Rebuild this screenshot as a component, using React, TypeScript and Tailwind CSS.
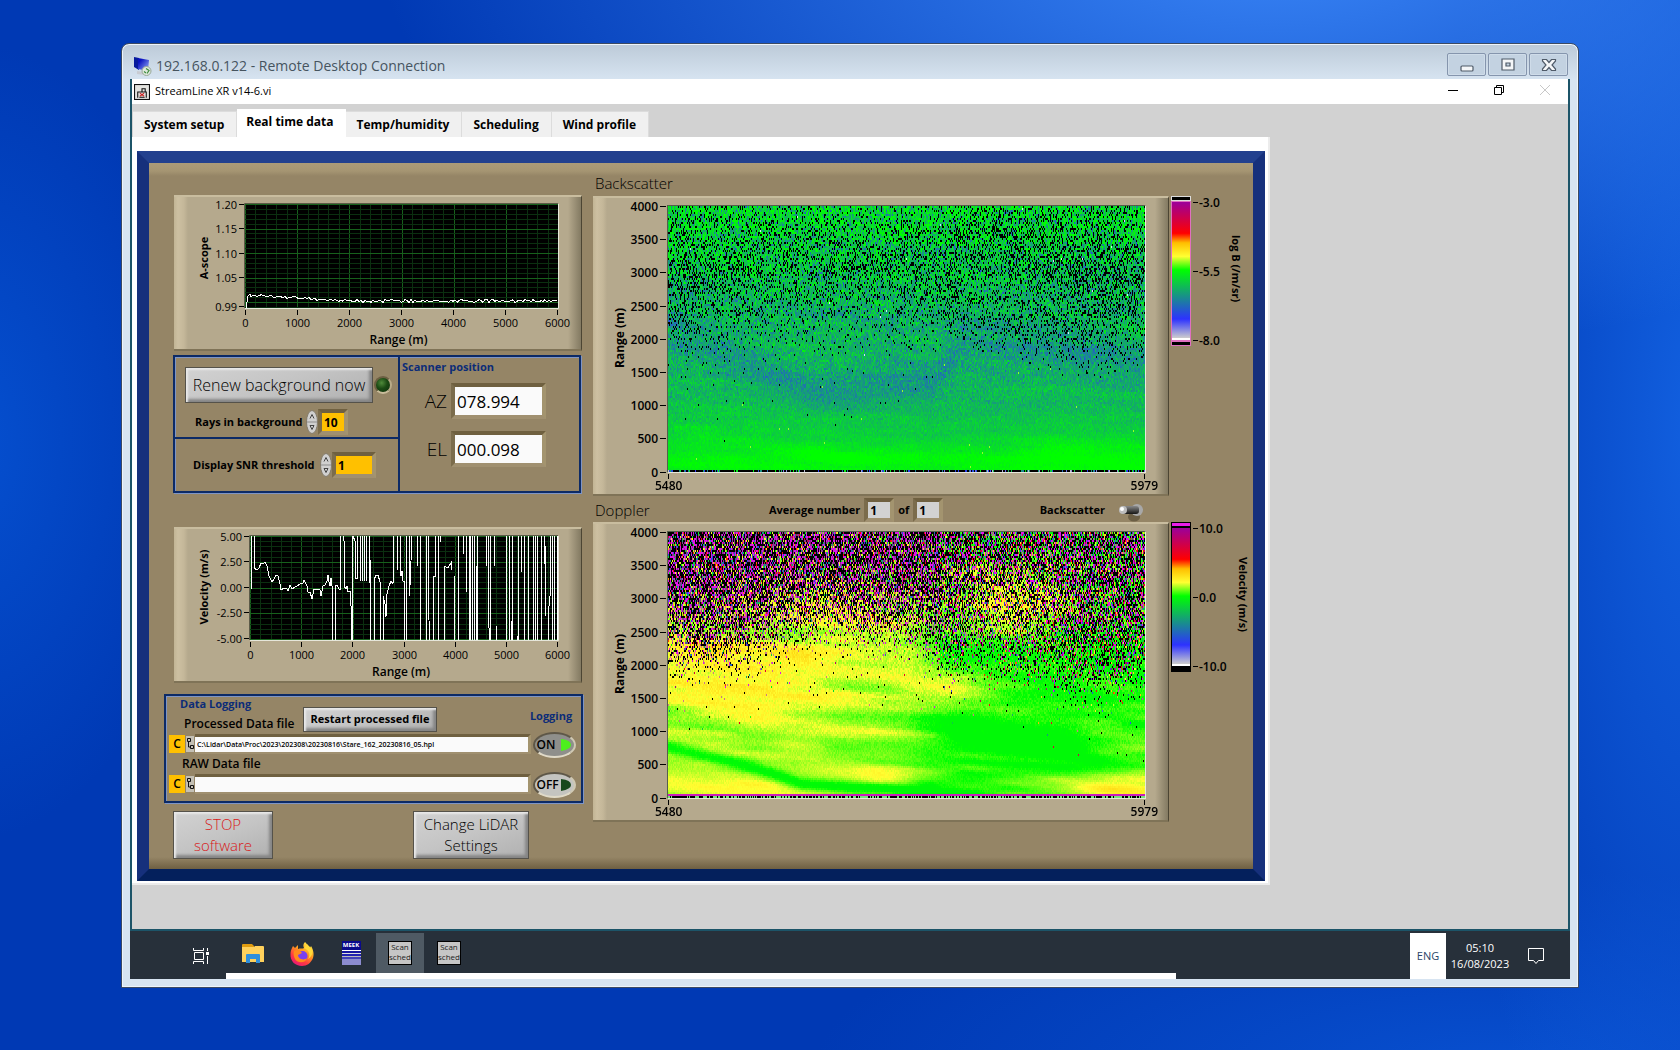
import { useEffect, useRef } from "react";
import type { ReactNode } from "react";

type Rgb = [number, number, number];

const SCALE: [number, Rgb][] = [
  [0, [205, 205, 205]],
  [0.14, [45, 50, 255]],
  [0.5, [0, 255, 0]],
  [0.6, [255, 255, 50]],
  [0.7, [255, 190, 0]],
  [0.77, [255, 0, 0]],
  [1, [155, 0, 155]],
];

function colour(v: number): Rgb {
  if (v <= 0) return [235, 235, 245];
  for (let i = 1; i < SCALE.length; i++) {
    const [b, cb] = SCALE[i];
    const [a, ca] = SCALE[i - 1];
    if (v <= b) {
      const t = (v - a) / (b - a);
      return [ca[0] + (cb[0] - ca[0]) * t, ca[1] + (cb[1] - ca[1]) * t, ca[2] + (cb[2] - ca[2]) * t];
    }
  }
  return [232, 30, 232];
}

function makeRandom(seed: number) {
  let s = seed;
  return () => {
    s = (s + 0x6d2b79f5) | 0;
    let t = Math.imul(s ^ (s >>> 15), 1 | s);
    t = (t + Math.imul(t ^ (t >>> 7), 61 | t)) ^ t;
    return ((t ^ (t >>> 14)) >>> 0) / 4294967296;
  };
}

function hash(x: number, y: number) {
  let h = Math.imul(x, 374761393) + Math.imul(y, 668265263);
  h = Math.imul(h ^ (h >>> 13), 1274126177);
  return ((h ^ (h >>> 16)) >>> 0) / 4294967296;
}

// smooth value noise in -1..1
function smooth(x: number, y: number) {
  const xi = Math.floor(x);
  const yi = Math.floor(y);
  const u = (x - xi) ** 2 * (3 - 2 * (x - xi));
  const w = (y - yi) ** 2 * (3 - 2 * (y - yi));
  const top = hash(xi, yi) * (1 - u) + hash(xi + 1, yi) * u;
  const low = hash(xi, yi + 1) * (1 - u) + hash(xi + 1, yi + 1) * u;
  return (top * (1 - w) + low * w) * 2 - 1;
}

const clamp = (v: number) => Math.max(0, Math.min(1, v));
const bump = (d: number, width: number) => Math.exp(-((d / width) ** 2));

// linear interpolation through [x, y] knots
function curve(knots: [number, number][], x: number) {
  for (let i = 1; i < knots.length; i++) {
    if (x <= knots[i][0]) {
      const t = (x - knots[i - 1][0]) / (knots[i][0] - knots[i - 1][0]);
      return knots[i - 1][1] + (knots[i][1] - knots[i - 1][1]) * t;
    }
  }
  return knots[knots.length - 1][1];
}

const COLS = 477;
const GATES = 133;

type Sample = (x: number, h: number, rnd: () => number) => Rgb;

function backscatter(x: number, h: number, rnd: () => number): Rgb {
  if (h < 0.004) return rnd() < 0.7 ? [0, 0, 0] : colour(rnd() * 0.5);
  const noise = rnd() + rnd() + rnd() - 1.5;
  let dropout = curve([[0, 0], [0.2, 0.001], [0.42, 0.01], [0.55, 0.08], [0.65, 0.17], [0.78, 0.24], [0.9, 0.19], [1, 0.15]], h);
  dropout += 0.1 * bump(x, 0.12) * bump(h - 0.55, 0.08);
  if (x > 0.57) {
    const floor = curve([[0.57, 0.5], [0.7, 0.42], [0.85, 0.34], [1, 0.36]], x);
    dropout += curve([[0, 0], [0.12, 0.12], [0.3, 0.06], [0.5, 0.03]], h - floor);
  }
  dropout *= 1 + 0.35 * smooth(x * 9 + 5, h * 9) + 0.3 * smooth(x * 3, h * 70);
  if (rnd() < dropout) return [0, 0, 0];
  const base = curve([[0, 0.48], [0.07, 0.47], [0.13, 0.43], [0.2, 0.4], [0.28, 0.37], [0.4, 0.37], [0.6, 0.365], [0.8, 0.4], [0.92, 0.43], [1, 0.44]], h);
  const streak = smooth(x * 6, h * 32 + x * 4) * 0.02 + smooth(x * 16, h * 66) * 0.014;
  const blue = 0.05 * bump(h - curve([[0, 0.54], [0.3, 0.3], [0.55, 0.32], [0.62, 0.5], [0.8, 0.45], [1, 0.42]], x), 0.07);
  const ridge = 0.035 * bump(h - curve([[0, 0.18], [0.2, 0.1], [0.35, 0.06], [1, 0.02]], x), 0.03);
  const v = base + streak - blue + ridge + noise * (0.025 + 0.18 * clamp(h - 0.08));
  if (rnd() < 0.0007) return h > 0.4 ? [210, 235, 240] : [150, 255, 40];
  return colour(Math.max(0.1, Math.min(0.5, v)));
}

function doppler(x: number, h: number, rnd: () => number): Rgb {
  if (h < 0.004) return rnd() < 0.5 ? [0, 0, 0] : [120, 230, 120];
  if (h < 0.012) return [205, 30, 190];
  const edge = curve([[0, 0.5], [0.12, 0.52], [0.3, 0.58], [0.5, 0.59], [0.56, 0.55], [0.575, 0.49], [0.66, 0.48], [0.76, 0.43], [0.88, 0.4], [1, 0.41]], x);
  const d = h - edge + 0.04 * smooth(x * 14, h * 3);
  let chaos = curve([[-0.3, 0], [-0.1, 0.015], [-0.04, 0.07], [0.03, 0.3], [0.12, 0.66], [0.25, 0.9], [0.5, 0.98]], d);
  if (x > 0.57) chaos *= 0.85;
  const plume = bump(x - 0.72, 0.12) * bump(h - 0.72, 0.12);
  chaos *= 1 - 0.35 * plume;
  if (rnd() < chaos) {
    const pick = rnd();
    if (pick < 0.48) return [0, 0, 0];
    const low = clamp(1 - d / 0.3);
    const calm = x > 0.57 ? 0.3 : 0;
    if (pick < 0.48 + 0.2 * (1 - 0.6 * low)) return [225, 20, 232];
    if (pick < 0.8 - calm * 0.5) return low > rnd() ? [205, 120, 135] : [140, 50, 150];
    return colour(0.1 + rnd() * 0.88);
  }
  let v = curve([[0, 0.58], [0.3, 0.585], [0.5, 0.565], [0.57, 0.545], [0.62, 0.53], [1, 0.515]], x);
  v += 0.1 * plume;
  v += 0.025 * bump(h - 0.5, 0.12) * clamp((0.56 - x) * 20);
  if (x > 0.57) v -= 0.04 * bump(h - 0.53, 0.05);
  if (x > 0.5) v += 0.035 * bump(h - 0.42, 0.06) * bump(x - 0.6, 0.05);
  v += smooth(x * 5, h * 19 + x * 3) * 0.03 + smooth(x * 11, h * 44 + x * 5) * 0.024;
  // descending low-speed band on the left, and its continuation
  v -= 0.1 * bump(h - curve([[0, 0.185], [0.1, 0.145], [0.18, 0.11], [0.28, 0.05], [0.4, 0.03], [0.55, 0.02], [1, -0.2]], x), 0.026);
  v -= 0.04 * bump(h - (0.27 - 0.4 * (x - 0.55)), 0.05) * clamp((x - 0.5) * 8);
  v -= 0.04 * bump(h - 0.31 + 0.1 * (x - 0.4), 0.025) * clamp(1 - Math.abs(x - 0.45) * 4);
  v += 0.13 * bump(x - 1, 0.18) * bump(h - 0.04, 0.06);
  v += (rnd() - 0.5) * (0.015 + 0.06 * h);
  return colour(Math.max(0.49, Math.min(0.66, v)));
}

function HeatMap({ sample, seed, label }: { sample: Sample; seed: number; label: string }) {
  const ref = useRef<HTMLCanvasElement>(null);

  useEffect(() => {
    const ctx = ref.current?.getContext("2d");
    if (!ctx) return;
    const rnd = makeRandom(seed);
    const image = ctx.createImageData(COLS, GATES);
    for (let row = 0; row < GATES; row++) {
      for (let col = 0; col < COLS; col++) {
        const [r, g, b] = sample(col / COLS, 1 - (row + 1) / GATES, rnd);
        const i = (row * COLS + col) * 4;
        image.data[i] = r;
        image.data[i + 1] = g;
        image.data[i + 2] = b;
        image.data[i + 3] = 255;
      }
    }
    ctx.putImageData(image, 0, 0);
  }, [sample, seed]);

  return (
    <canvas
      ref={ref}
      width={COLS}
      height={GATES}
      role="img"
      aria-label={label}
      className="block h-[268px] w-full border border-t-[#55604a] border-l-[#55604a] border-r-[#e8e8dc] border-b-[#e8e8dc] [image-rendering:pixelated]"
    />
  );
}

function Bevel({ children, className = "" }: { children: ReactNode; className?: string }) {
  return (
    <div
      className={`border-t-2 border-r border-b-2 border-t-[#c9bd9f] border-r-[#4c4533] border-b-[#7f7357] bg-[linear-gradient(to_right,#c2b595_0,#cdc0a2_4px,#c4b799_10px,#b5a98d_14px,#b5a98d_calc(100%-13px),#837a62_100%)] ${className}`}
    >
      {children}
    </div>
  );
}

function HeatPanel({ sample, seed, label }: { sample: Sample; seed: number; label: string }) {
  const ticks = [4000, 3500, 3000, 2500, 2000, 1500, 1000, 500, 0];
  return (
    <Bevel className="flex h-[300px] flex-1">
      <svg className="h-full w-[74px] shrink-0 text-[12px] font-semibold" aria-hidden="true">
        <text transform="translate(31 140) rotate(-90)" textAnchor="middle" className="font-bold">
          Range (m)
        </text>
        {ticks.map((t, i) => (
          <g key={t}>
            <text x="65" y={13 + Math.round(i * 33.2)} textAnchor="end">
              {t}
            </text>
            <path d={`M67 ${Math.round(i * 33.2) + 8.5}h6`} stroke="#000" />
          </g>
        ))}
      </svg>
      <div className="flex flex-1 flex-col pt-[7px]">
        <HeatMap sample={sample} seed={seed} label={label} />
        <div className="flex justify-between px-px pt-px">
          <span className="h-[5px] w-px bg-black" />
          <span className="h-[5px] w-px bg-black" />
        </div>
        <div className="-mx-3 flex justify-between text-[12px] leading-[14px] font-semibold">
          <span>5480</span>
          <span>5979</span>
        </div>
      </div>
      <div className="w-[22px]" />
    </Bevel>
  );
}

function ColourScale({ id, labels, title, doppler: dop }: { id: string; labels: string[]; title: string; doppler?: boolean }) {
  return (
    <svg className="ml-0.5 h-[150px] w-[82px] shrink-0 overflow-visible text-[12px] font-semibold" aria-label={title}>
      <defs>
        <linearGradient id={id} x1="0" y1="1" x2="0" y2="0">
          {SCALE.map(([at, c]) => (
            <stop key={at} offset={at} stopColor={`rgb(${c.join(",")})`} />
          ))}
        </linearGradient>
      </defs>
      <rect width="20" height="150" fill={dop ? "#000" : "#e070c0"} />
      {dop ? <rect x="1" y="1" width="18" height="3" fill="#e81ee8" /> : <rect width="20" height="5" fill="#ddd" />}
      {!dop && <rect x="1" y="1" width="18" height="3" fill="#000" />}
      <rect x="1" y="6" width="18" height="136" fill={`url(#${id})`} />
      <rect x="1" y="142" width="18" height="2" fill="#fff" />
      <rect x="1" y="146" width="18" height="3" fill="#000" />
      {labels.map((l, i) => (
        <g key={l}>
          <path d={`M22 ${6.5 + i * 69}h5`} stroke="#000" />
          <text x="28" y={11 + i * 69}>
            {l}
          </text>
        </g>
      ))}
      <text transform={dop ? "translate(68 35) rotate(90)" : "translate(61 39) rotate(90)"} className="text-[11px] font-bold">
        {title}
      </text>
    </svg>
  );
}

type ChartProps = {
  title: string;
  left: number;
  yTicks: [string, number][];
  titleY: number;
  minorY: number;
  children: ReactNode;
};

function LineChart({ title, left, yTicks, titleY, minorY, children }: ChartProps) {
  const width = 384 - left;
  const height = 104;
  const minorX = Array.from({ length: 30 }, (_, i) => (i * width) / 30);
  const rows = Array.from({ length: Math.floor(height / minorY) + 1 }, (_, i) => i * minorY);
  return (
    <Bevel className="mr-0.5 ml-2.5">
      <svg className="block h-[152px] w-full text-[11px]" aria-label={title}>
        <text transform={`translate(34 ${titleY}) rotate(-90)`} textAnchor="middle" className="font-bold">
          {title}
        </text>
        <svg x={left} y="7" width={width} height={height} shapeRendering="crispEdges">
          <rect width="100%" height="100%" fill="#000" />
          {minorX.map((x, i) => (
            <path key={x} d={`M${Math.round(x)} 0V${height}`} stroke={i % 5 ? "#0b2f10" : "#17601c"} />
          ))}
          {rows.map((y, i) => (
            <path key={y} d={`M0 ${Math.round(y)}H${width}`} stroke={i % 5 ? "#0b2f10" : "#17601c"} />
          ))}
          <g fill="none" stroke="#fff">
            {children}
          </g>
        </svg>
        <path d={`M${left - 0.5} 111V6.5H384`} fill="none" stroke="#5c5a48" />
        <path d={`M${left} 111.5H384.5V7`} fill="none" stroke="#e6e6da" />
        {yTicks.map(([l, y]) => (
          <g key={l}>
            <text x={left - 8} y={y + 4} textAnchor="end">
              {l}
            </text>
            <path d={`M${left - 6} ${y - 0.5}h5`} stroke="#000" />
          </g>
        ))}
        {[0, 1000, 2000, 3000, 4000, 5000, 6000].map((r, i) => {
          const x = Math.round(left + (i * (width - 1)) / 6) + 0.5;
          return (
            <g key={r}>
              <path d={`M${x} 113v5`} stroke="#000" />
              <text x={x} y="130" textAnchor="middle">
                {r}
              </text>
            </g>
          );
        })}
        <text x={left + width / 2 - 3} y="147" textAnchor="middle" className="text-[12px] font-semibold">
          Range (m)
        </text>
      </svg>
    </Bevel>
  );
}

function ScopeLine() {
  const pts = ["1,104", "3,92", "5,90"];
  for (let x = 6; x < 313; x += 2) {
    const level = x < 110 ? 91 + x * 0.055 : 97;
    pts.push(`${x},${(level + (hash(x, 7) - 0.5) * 3).toFixed(1)}`);
  }
  return <polyline points={pts.join(" ")} />;
}

const VELOCITY_TRACE =
  "M1 53V-2H4V32L7 34L9 32L11 27L13 28L15 26L17 30L19 40L22 46L24 43L26 39L28 40L30 48L31 54L34 52L37 53L38 55L40 49L42 53L45 51L47 50L50 48L53 47L54 44L57 50L58 56L60 56L62 63L64 53L67 53L70 54L71 60L73 50L75 49L77 45L78 39L79 46L80 50L81 42L82 50V108M85 108V50L87 49L89 53H90V0M93 0L94 5V50L96 53L97 50L98 56L100 55L101 70V108M102 108V0M103 0L105 5L106 42L107 42V0M110 0V45M112 45V0M114 0V45M116 45V0M119 0V47M120 24V104M124 104V44L126 39L128 39L130 46V104M133 104V60L135 68L136 81L137 58L139 50L141 45L143 48L144 0M147 0V34M150 0V34L151 40L152 35L153 45L154 45V104M156 104V0M159 0V60M160 50L162 0M167 0V30M170 104V0M176 0V104M178 0V64L180 104M183 104V40H185V0M188 0V104M190 6L191 0M194 104V30L198 32L201 27V34M204 40V104M208 0V104M213 0V18M216 0V56M219 0V104M220 0V104M222 0V104M224 0V104M226 104V30M227 0V104M236 0V30M238 0V80L240 104M240 0V104M244 0V30M246 104V90M256 0V104M259 0V104M261 85V104M262 0V104M267 104V100M268 0V104M271 0V36M274 0V104M278 0V104M283 0V104M285 0V104M287 0V104M291 0V104M294 0V28M295 10V80M298 104V80L300 60V0M302 0V104M304 104V0M307 0V104";

const SUNK = "border-4 border-t-[#6f6040] border-l-[#7b6c4c] border-r-[#a3946f] border-b-[#a09070]";
const METAL =
  "border-[#55524a] border bg-[linear-gradient(160deg,#d2d2d2,#c4c4c4_50%,#b0b0b0)] shadow-[inset_2px_2px_2px_#e8e8e8,inset_-3px_-3px_3px_#858585]";
const FRAME = "border-2 border-[#0c2a66] shadow-[inset_1px_1px_0_#7f95c4,1px_1px_0_#7f95c4]";

function Spinner() {
  return (
    <svg className="h-6 w-3 shrink-0" aria-hidden="true">
      <ellipse cx="6" cy="12" rx="5.5" ry="11.5" fill="#d0d0d0" stroke="#827a6a" />
      <path d="M1 12h10" stroke="#8c8c8c" />
      <path d="M4 8.500l2-4 2 4M4 15.500l2 4 2-4z" fill="none" stroke="#444" />
    </svg>
  );
}

function PathRow({ id, value }: { id: string; value: string }) {
  return (
    <div className="flex items-center">
      <button aria-label="Drive" className="h-[18px] w-4 bg-[#ffc000] text-[12px] leading-4 font-semibold">
        C
      </button>
      <svg className="mx-px h-4 w-2 bg-[#c4c0b4]" aria-hidden="true">
        <path d="M1.500 2.500h3v3h-3zM4.500 9.500h3v3h-3zM2.500 6v5h2" fill="none" stroke="#111" />
      </svg>
      <input
        id={id}
        readOnly
        value={value}
        className="h-5 min-w-0 flex-1 border-t-3 border-r-3 border-b-2 border-t-[#6f6040] border-r-[#a3946f] border-b-[#a09070] bg-[#fafafa] px-0.5 text-[7px] leading-3 font-semibold"
      />
    </div>
  );
}

function LogSwitch({ on }: { on: boolean }) {
  return (
    <button
      aria-label={on ? "Processed logging on" : "Raw logging off"}
      className={`flex h-[26px] w-[43px] items-center justify-between rounded-[50%] border-2 border-t-[#5e5748] border-r-[#d0c9b4] border-b-[#e0dac8] border-l-[#5e5748] px-0.5 text-[12px] font-semibold ${on ? "bg-[#8f8f8b]" : "bg-[#c4c4c0]"}`}
    >
      <span>{on ? "ON" : "OFF"}</span>
      <svg className="h-3.5 w-[11px] shrink-0" aria-hidden="true">
        <path d="M0 1Q10 2 10 7Q10 11 0 13z" fill={on ? "#4df01c" : "#17481a"} />
      </svg>
    </button>
  );
}

function LeftColumn() {
  return (
    <div className="w-[420px] shrink-0 pt-8">
      <LineChart
        title="A-scope"
        left={71}
        titleY={61}
        minorY={4.9}
        yTicks={[
          ["1.20", 8],
          ["1.15", 32],
          ["1.10", 57],
          ["1.05", 81],
          ["0.99", 110],
        ]}
      >
        <ScopeLine />
      </LineChart>

      <div className={`mt-1 mr-[3px] ml-[9px] flex h-[138px] ${FRAME}`}>
        <div className="flex w-[225px] flex-col border-r-2 border-[#0c2a66]">
          <div className="h-[82px] border-b-2 border-[#0c2a66] pt-2.5 pl-2.5">
            <div className="flex items-center">
              <button className={`h-9 w-[188px] text-[16px] font-light ${METAL}`}>Renew background now</button>
              <span className="ml-px size-[18px] rounded-full border-2 border-t-[#6c5f42] border-r-[#b9ab88] border-b-[#c9bc9a] border-l-[#6c5f42] bg-[radial-gradient(circle_at_40%_35%,#4f8a3a,#1b4a14_45%,#0c2c0a)]" />
            </div>
            <div className="mt-1.5 flex items-center pl-2.5 text-[11px] font-bold">
              <label htmlFor="rays" className="w-[111px] whitespace-nowrap">Rays in background</label>
              <Spinner />
              <input id="rays" defaultValue="10" className={`h-[26px] w-[30px] bg-[#ffc000] px-0.5 text-[12px] ${SUNK}`} />
            </div>
          </div>
          <div className="flex flex-1 items-center pl-[18px] text-[11px] font-bold">
            <label htmlFor="snr" className="w-[127px] whitespace-nowrap">Display SNR threshold</label>
            <Spinner />
            <input id="snr" defaultValue="1" className={`h-[26px] w-[44px] bg-[#ffc000] px-0.5 text-[12px] ${SUNK}`} />
          </div>
        </div>
        <div className="flex flex-1 flex-col pl-0.5">
          <span className="mt-0.5 text-[11px] leading-4 font-bold text-[#0c2c78]">Scanner position</span>
          <div className="mt-2 mr-[33px] flex flex-col gap-3 text-[17px]">
            <div className="flex items-center justify-end gap-1">
              <label htmlFor="az" className="text-[19px] leading-6 font-light">AZ</label>
              <input id="az" readOnly value="078.994" className={`h-9 w-[95px] bg-[#fafafa] px-0.5 ${SUNK}`} />
            </div>
            <div className="flex items-center justify-end gap-1">
              <label htmlFor="el" className="text-[19px] leading-6 font-light">EL</label>
              <input id="el" readOnly value="000.098" className={`h-9 w-[95px] bg-[#fafafa] px-0.5 ${SUNK}`} />
            </div>
          </div>
        </div>
      </div>

      <div className="mt-[34px]">
        <LineChart
          title="Velocity (m/s)"
          left={76}
          titleY={58}
          minorY={5.15}
          yTicks={[
            ["5.00", 8],
            ["2.50", 33],
            ["0.00", 59],
            ["-2.50", 84],
            ["-5.00", 110],
          ]}
        >
          <path d={VELOCITY_TRACE} />
        </LineChart>
      </div>

      <div className={`mt-[11px] mr-px flex h-[109px] pl-[3px] text-[11px] font-bold ${FRAME}`}>
        <div className="flex-1">
          <div className="flex h-[38px] justify-between pr-[94px]">
            <div className="leading-4">
              <p className="pl-[11px] text-[#0c2c78]">Data Logging</p>
              <label htmlFor="processed" className="mt-1 block pl-[15px] text-[12px] font-semibold">Processed Data file</label>
            </div>
            <button className={`mt-[11px] h-[25px] w-[134px] ${METAL}`}>Restart processed file</button>
          </div>
          <PathRow id="processed" value="C:\Lidar\Data\Proc\2023\202308\20230816\Stare_162_20230816_05.hpl" />
          <label htmlFor="raw" className="mt-0.5 mb-0.5 block pl-[13px] text-[12px] leading-4 font-semibold">RAW Data file</label>
          <PathRow id="raw" value="" />
        </div>
        <div className="flex w-[50px] flex-col items-center pt-3 pr-1">
          <span className="pr-1.5 leading-4 text-[#0c2c78]">Logging</span>
          <div className="mt-2 flex flex-col gap-3.5">
            <LogSwitch on />
            <LogSwitch on={false} />
          </div>
        </div>
      </div>

      <div className="mt-2 flex justify-between pr-[55px] pl-[9px] text-[15px] leading-[21px] font-light">
        <button className={`h-12 w-[100px] text-[#d81818] ${METAL}`}>
          STOP
          <br />
          software
        </button>
        <button className={`h-12 w-[116px] ${METAL}`}>
          Change LiDAR
          <br />
          Settings
        </button>
      </div>
    </div>
  );
}

function RightColumn() {
  return (
    <div className="ml-[9px] flex min-w-0 flex-1 flex-col">
      <h2 className="h-[33px] pt-2 pl-0.5 text-[15px] leading-6 font-light">Backscatter</h2>
      <div className="flex">
        <HeatPanel sample={backscatter} seed={11} label="Backscatter by range and ray" />
        <ColourScale id="scale-b" labels={["-3.0", "-5.5", "-8.0"]} title="log B (/m/sr)" />
      </div>
      <div className="flex h-[26px] items-center pt-0.5 text-[11px] font-bold">
        <h2 className="w-[176px] pl-0.5 text-[15px] font-light">Doppler</h2>
        <label htmlFor="avg" className="mr-0.5 whitespace-nowrap">Average number</label>
        <input id="avg" readOnly value="1" className={`ml-0.5 h-6 w-[30px] bg-[#d2d2d2] px-0.5 text-[12px] ${SUNK}`} />
        <label htmlFor="avg-of" className="px-1">of</label>
        <input id="avg-of" readOnly value="1" className={`h-6 w-[30px] bg-[#d2d2d2] px-0.5 text-[12px] ${SUNK}`} />
        <span className="flex-1" />
        <span id="plot-mode">Backscatter</span>
        <button role="switch" aria-checked="false" aria-labelledby="plot-mode" className="mr-[108px] ml-3">
          <svg className="block h-6 w-7">
            <defs>
              <linearGradient id="lever" x1="0" y1="0" x2="0" y2="1">
                <stop offset="0" stopColor="#8a8a8a" />
                <stop offset="1" stopColor="#151515" />
              </linearGradient>
            </defs>
            <ellipse cx="17" cy="19" rx="6" ry="4.500" fill="#6c5f45" />
            <circle cx="20" cy="12" r="6" fill="#a8a8a8" />
            <rect x="5" y="8" width="17" height="8" rx="3" fill="url(#lever)" />
            <circle cx="6" cy="12" r="4" fill="#bdbdbd" />
            <circle cx="5" cy="11" r="2" fill="#fff" />
          </svg>
        </button>
      </div>
      <div className="flex">
        <HeatPanel sample={doppler} seed={29} label="Doppler velocity by range and ray" />
        <ColourScale id="scale-v" labels={["10.0", "0.0", "-10.0"]} title="Velocity (m/s)" doppler />
      </div>
    </div>
  );
}

function TitleBar() {
  return (
    <header className="flex h-[35px] items-start justify-between pt-[9px] pr-2.5 pl-[11px]">
      <div className="flex items-center gap-1 pt-[3px]">
        <svg className="h-5 w-[19px]" viewBox="0 0 19 20" aria-hidden="true">
          <defs>
            <linearGradient id="screen" x1="0" y1="0" x2="1" y2="1">
              <stop offset="0.2" stopColor="#0a12c0" />
              <stop offset="1" stopColor="#9db4f8" />
            </linearGradient>
          </defs>
          <path d="M1 1l5 1v12l-5-3z" fill="#071a9c" />
          <path d="M5 2l11 2-1 11-10-2z" fill="url(#screen)" />
          <path d="M4 15l7 1 1 3-8-1z" fill="#c9ccd2" />
          <circle cx="13.500" cy="15" r="4.500" fill="#dfe8dd" stroke="#98a898" />
          <path d="M11 15.500l2 1.500M13 12.500l3 2-2 3" fill="none" stroke="#3d8c3d" strokeWidth="1.200" />
        </svg>
        <span className="text-[14px] leading-5 text-[#46545f]">192.168.0.122 - Remote Desktop Connection</span>
      </div>
      <div className="flex gap-0.5">
        <WindowButton label="Minimize window">
          <rect x="13" y="12" width="12" height="5" rx="1" />
        </WindowButton>
        <WindowButton label="Restore window">
          <path d="M13 5h12v11H13zM17 9h4v3h-4z" fillRule="evenodd" />
        </WindowButton>
        <WindowButton label="Close window">
          <path d="M12.500 5.500h4l2.500 3 2.500-3h4v1.500l-3.500 4 3.500 4v1.500h-4l-2.500-3-2.500 3h-4V15l3.500-4-3.500-4z" />
        </WindowButton>
      </div>
    </header>
  );
}

function WindowButton({ label, children }: { label: string; children: ReactNode }) {
  return (
    <button
      aria-label={label}
      className="h-[23px] w-[39px] rounded-[2px] border border-[#8595ad] bg-[#c3d2e1] shadow-[inset_0_0_0_1px_#cfdce9]"
    >
      <svg className="block h-[21px] w-[37px]" fill="#f4f6f8" stroke="#4f5a68" strokeWidth="1.200">
        {children}
      </svg>
    </button>
  );
}

function AppBar() {
  return (
    <div className="flex h-[25px] items-center bg-white pl-0.5">
      <svg className="size-4" viewBox="0 0 15 15" fill="none" stroke="#111" aria-hidden="true">
        <rect x="0.500" y="0.500" width="14" height="14" fill="#e4e4e0" />
        <path d="M3.500 13V7.500h8V13M7.500 7V4.500h3V7M5 12.500h5" />
        <path d="M5.500 8.500l4 3M9.500 8.500l-4 3" stroke="#c22" />
      </svg>
      <span className="flex-1 pl-[5px] text-[11px]">StreamLine XR v14-6.vi</span>
      <div className="flex w-[121px] justify-between pr-[17px] pb-1 text-black">
        <button aria-label="Minimize">
          <svg className="block size-3" stroke="currentColor"><path d="M1 6.500h10" /></svg>
        </button>
        <button aria-label="Restore">
          <svg className="block size-3" stroke="currentColor" fill="none">
            <path d="M1.500 3.500h7v7h-7zM3.500 3V1.500h7v7H9" />
          </svg>
        </button>
        <button aria-label="Close" disabled className="text-[#c8c8c8]">
          <svg className="block size-3" stroke="currentColor"><path d="M1 1l10 10M11 1L1 11" /></svg>
        </button>
      </div>
    </div>
  );
}

function ScanIcon() {
  return (
    <span className="flex size-6 flex-col border border-black bg-[#c6c6c6] text-center text-[8px] leading-[10px] text-[#222]">
      <span>Scan</span>
      <span>sched</span>
    </span>
  );
}

function Taskbar() {
  const app = "flex h-[42px] items-center justify-center border-b-2 border-[#6488b0]";
  return (
    <footer className="relative flex h-12 items-start justify-between bg-[#27303a] pt-0.5 text-white">
      <div className="flex pl-[58px]">
        <button aria-label="Task view" className="mr-[19px] flex h-[42px] w-[26px] items-center justify-center pt-1">
          <svg className="h-4 w-[17px]" viewBox="0 0 17 16" fill="none" stroke="#fff" aria-hidden="true">
            <path d="M.5 0v2.500h10V0M.5 16v-2.500h10V16M1.500 4.500h9v7h-9zM14.500 0v3M14.500 8v8" />
            <path d="M13 4h3v3h-3z" fill="#fff" stroke="none" />
          </svg>
        </button>
        <button aria-label="File Explorer" className={`w-10 ${app}`}>
          <svg className="h-[19px] w-[22px]" viewBox="0 0 22 19">
            <path d="M0 1q0-1 1-1h9l2 2v3H0z" fill="#e09c10" />
            <path d="M0 3h12l1-1h8q1 0 1 1v15H0z" fill="#ffd15c" />
            <path d="M4 19v-8q0-1 1-1h12q1 0 1 1v8h-4v-4H8v4z" fill="#2f8fdc" />
          </svg>
        </button>
        <button aria-label="Firefox" className="mx-[5px] flex h-[42px] w-12 items-center justify-center">
          <svg className="size-6" viewBox="0 0 24 24">
            <defs>
              <linearGradient id="fox" x1="0.8" y1="0" x2="0.2" y2="1">
                <stop offset="0" stopColor="#fff14a" />
                <stop offset="0.4" stopColor="#ff9a1f" />
                <stop offset="0.7" stopColor="#ff3b40" />
                <stop offset="1" stopColor="#e5127e" />
              </linearGradient>
            </defs>
            <path d="M15 0c3 3 3 5 5 6l1-2c3 5 3 9 2 12-2 5-6 8-11 8C5 24 0 19 .5 12c0-3 1-5 2.500-8l2 2 3-3v4c2-1 5 0 6-1-1-2-1-4 1-6z" fill="url(#fox)" />
            <circle cx="12.500" cy="14" r="5" fill="#7a3ff0" />
            <path d="M4 9c3-2 6-1 8 2l-4 2c0 4 6 6 9 3-1 5-9 6-12 1-1-2-2-5-1-8z" fill="#ff8a1c" />
            <path d="M14 6c5 2 7 7 4 11 5-3 6-9 2-12l-3-3z" fill="#ffd93a" />
          </svg>
        </button>
        <button aria-label="Meek" className={`w-10 ${app}`}>
          <span className="flex h-6 w-[19px] flex-col bg-[linear-gradient(#0a0a8c_0_9px,#fff_9px_10px,#1515a0_10px_12px,#ddd_12px_13px,#2020b0_13px_15px,#bbb_15px_16px,#4040b8_16px_18px,#8c8cd0_18px_24px)] text-center text-[6px] leading-[9px] font-bold">
            MEEK
          </span>
        </button>
        <button aria-label="Scan scheduler" className={`mx-[5px] w-12 bg-[#4f5a64] ${app}`}>
          <ScanIcon />
        </button>
        <button aria-label="Scan scheduler, second window" className={`w-10 ${app}`}>
          <ScanIcon />
        </button>
      </div>
      <div className="flex h-full items-center pr-[25px] text-[11px]">
        <button className="h-full w-9 bg-white text-[#2a4468]">ENG</button>
        <div className="w-[68px] text-center leading-4">
          <p>05:10</p>
          <p>16/08/2023</p>
        </div>
        <button aria-label="Notifications" className="ml-3.5">
          <svg className="block h-4 w-[17px]" fill="none" stroke="#fff">
            <path d="M.5.5h15v12h-5l-2.500 3-2.500-3h-5z" />
          </svg>
        </button>
      </div>
      <div className="absolute bottom-0 left-24 h-1.5 w-[66%] bg-white" />
    </footer>
  );
}

export default function App() {
  const tabs = ["System setup", "Real time data", "Temp/humidity", "Scheduling", "Wind profile"];
  return (
    <div className="flex min-h-screen flex-col bg-[#0039b4] bg-[radial-gradient(ellipse_900px_420px_at_76%_-6%,#3a86f8,transparent),radial-gradient(ellipse_260px_900px_at_101%_40%,#1260e0,transparent),radial-gradient(ellipse_700px_200px_at_90%_102%,#0850d0,transparent),radial-gradient(ellipse_240px_400px_at_-2%_42%,#0550d0,transparent)] pt-[43px] pr-[101px] pb-[62px] pl-[121px] font-['Open_Sans',sans-serif] text-black">
      <div className="flex flex-1 flex-col rounded-t-lg border border-[#3c4a62] bg-[linear-gradient(#bccad8,#d7e4f1_36px)] shadow-[inset_0_0_0_1px_#eef4fa]">
        <TitleBar />
        <div className="mx-2 mb-2 flex flex-1 flex-col">
          <div className="flex flex-1 flex-col border-x-2 border-b-2 border-[#1c5468] bg-[#d2d2d2]">
            <AppBar />
            <nav className="mt-[5px] flex items-end pl-px text-[12px] font-bold">
              {tabs.map((t) => (
                <button
                  key={t}
                  className={
                    t === "Real time data"
                      ? "h-7 bg-white pr-3 pb-0.5 pl-[9px]"
                      : "h-[26px] border-t border-r border-[#dcdcdc] bg-[#f0f0f0] pr-3 pl-[11px]"
                  }
                >
                  {t}
                </button>
              ))}
            </nav>
            <main className="w-full max-w-[1138px] border-r-2 border-b-2 border-[#ececec] bg-white pt-3.5 pr-[3px] pb-0.5 pl-[5px]">
              <div className="border-[12px] border-t-[#22408e] border-r-[#16307c] border-b-[#04205c] border-l-[#16307c] bg-[#958566]">
                <div className="flex bg-[linear-gradient(#ab9b78,#a59572_8px,#958566_13px,#958566_calc(100%-12px),#6e5f42)] pb-2.5 pl-[15px]">
                  <LeftColumn />
                  <RightColumn />
                </div>
              </div>
            </main>
          </div>
          <Taskbar />
        </div>
      </div>
    </div>
  );
}
